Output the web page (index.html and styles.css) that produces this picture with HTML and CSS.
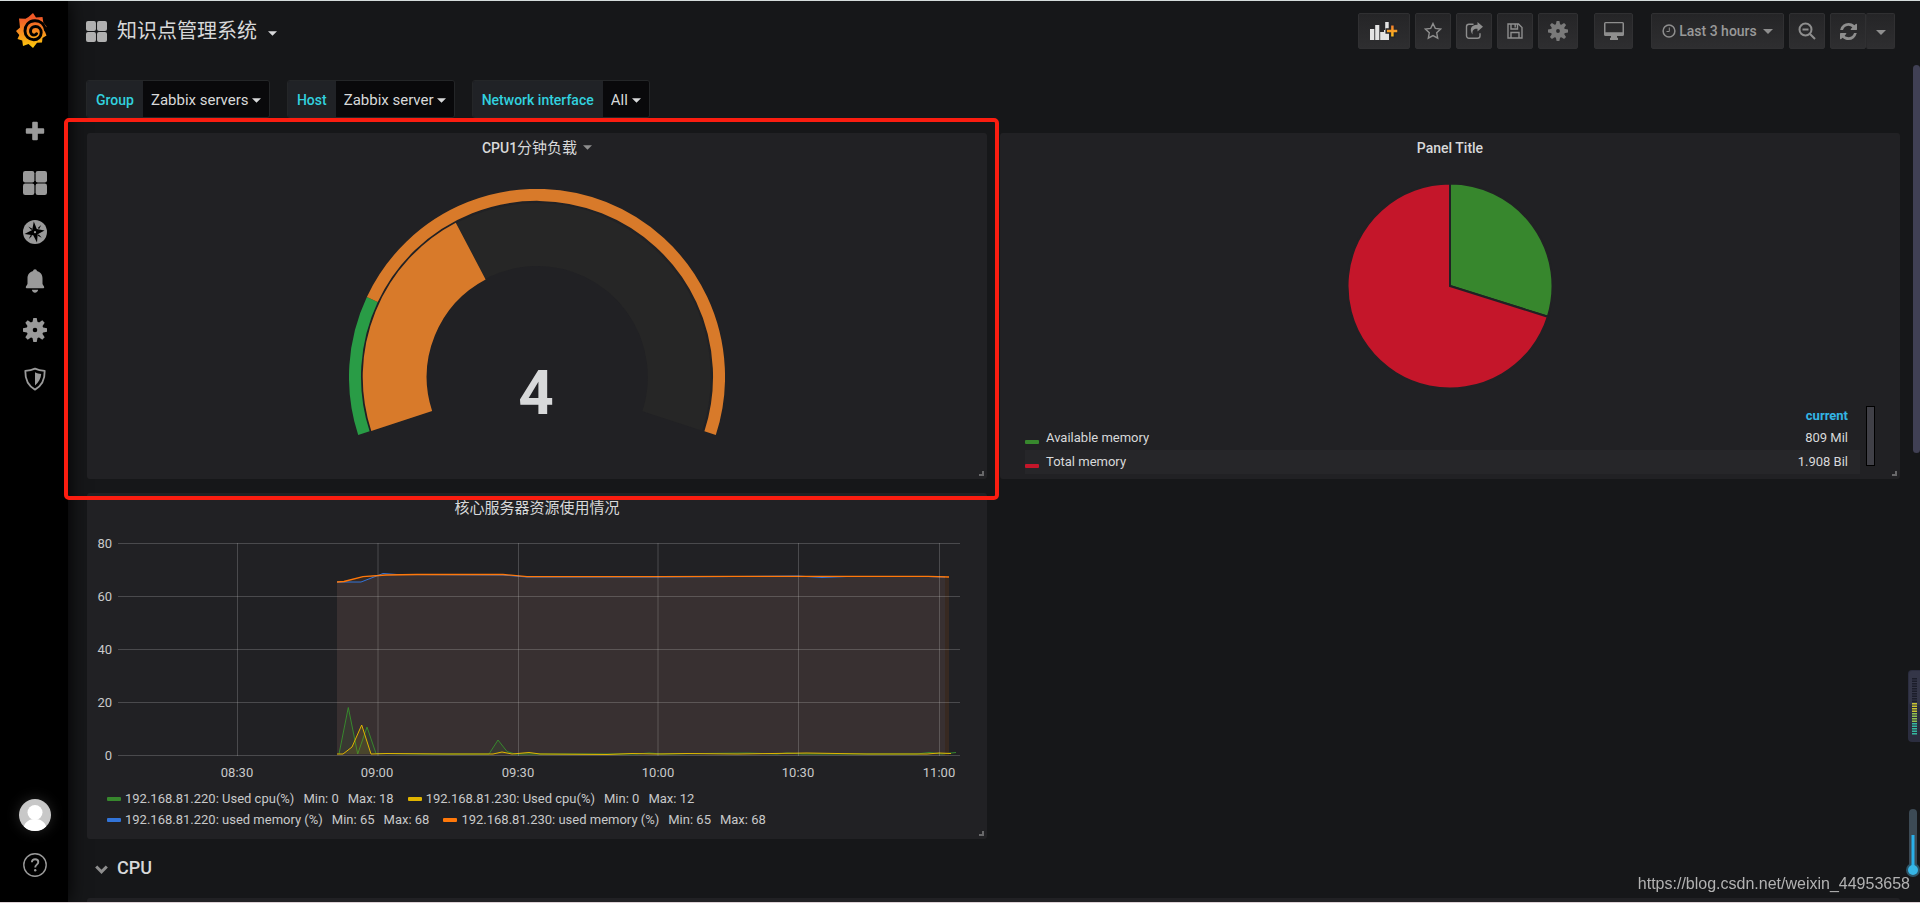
FILE: index.html
```html
<!DOCTYPE html>
<html lang="zh-CN">
<head>
<meta charset="utf-8">
<title>知识点管理系统 - Grafana</title>
<link rel="stylesheet" href="styles.css">
</head>
<body>
<svg class="defs" aria-hidden="true">
  <defs>
    <linearGradient id="logoFill" x1="0" y1="0" x2="0" y2="1">
      <stop offset="0.15" stop-color="#f05a28"/><stop offset="0.6" stop-color="#f7941d"/><stop offset="1" stop-color="#fbca0a"/>
    </linearGradient>
    <linearGradient id="plusFill" x1="0" y1="0" x2="0" y2="1">
      <stop offset="0" stop-color="#f47b2f"/><stop offset="1" stop-color="#fcc21c"/>
    </linearGradient>
    <symbol id="caret" viewBox="0 0 10 5"><path d="M0 0h10L5 5z"/></symbol>
    <symbol id="tiles" viewBox="0 0 24 24"><rect width="11.4" height="11.4" rx="2.2"/><rect x="12.6" width="11.4" height="11.4" rx="2.2"/><rect y="12.6" width="11.4" height="11.4" rx="2.2"/><rect x="12.6" y="12.6" width="11.4" height="11.4" rx="2.2"/></symbol>
    <symbol id="gear" viewBox="0 0 24 24">
      <path fill-rule="evenodd" d="M12 3.600a8.400 8.400 0 1 0 0 16.800a8.400 8.400 0 1 0 0-16.800zM12 9.700a2.300 2.300 0 1 1 0 4.600a2.300 2.300 0 1 1 0-4.600z"/>
      <path d="M10.300 0h3.400l1 5h-5.400zM10.300 24h3.400l1-5h-5.400zM0 10.300v3.400l5 1V9.300zM24 10.300v3.400l-5 1V9.300z"/>
      <path transform="rotate(45 12 12)" d="M10.300 0h3.400l1 5h-5.400zM10.300 24h3.400l1-5h-5.400zM0 10.300v3.400l5 1V9.300zM24 10.300v3.400l-5 1V9.300z"/>
    </symbol>
  </defs>
</svg>
<div class="app">
  <nav class="sidemenu" aria-label="Main">
    <a class="logo" href="#" aria-label="Home">
      <svg viewBox="0 0 31 35" width="31" height="35">
        <path fill="url(#logoFill)" d="M17 0l3 4.500 6.500-.5 .8 5.500 3.200 4-2 4 2 5-4 2.500-.5 4.500-5 .2L17 35l-4.500-4-5.500 2-.8-5.500L1.500 26l1.800-4L0 18l4-3.500L3 5.500l6.500.3L12.500 4z"/>
        <path fill="none" stroke="#000" stroke-width="2.900" stroke-linecap="round" d="M29.500 17C28 10 23 7.500 18.500 7.800 12.500 8.200 9 12.500 9 18c0 5 4 8.700 8.800 8.700 4.200 0 7.400-3.200 7.400-7.200 0-3.500-2.500-6-5.700-6-3 0-5 2.100-5 4.800 0 2.200 1.500 3.800 3.500 3.800 1.200 0 2-.6 2.500-1.400"/>
      </svg>
    </a>
    <a class="create" href="#" aria-label="Create"><svg viewBox="0 0 24 24" width="24" height="24"><path d="M9.200 3.800a1 1 0 0 1 1-1h3.600a1 1 0 0 1 1 1v5.400h5.400a1 1 0 0 1 1 1v3.600a1 1 0 0 1-1 1h-5.400v5.400a1 1 0 0 1-1 1h-3.600a1 1 0 0 1-1-1v-5.400H3.800a1 1 0 0 1-1-1v-3.600a1 1 0 0 1 1-1h5.400z"/></svg></a>
    <a href="#" aria-label="Dashboards"><svg width="24" height="24"><use href="#tiles"/></svg></a>
    <a href="#" aria-label="Explore"><svg viewBox="0 0 24 24" width="24" height="24"><circle cx="12" cy="12" r="12"/><path fill="#000" d="M10.800 1.500l3 7.500 7.700 1.500-6.800 3.700L14 22.500l-3.800-7.300L1.500 14l7.700-4z"/><path fill="#000" d="M5.300 6.500l4 2.200-1 1.200zM18.200 5l-2.100 4-1.300-1zM18.700 17.700l-4-2 1-1.400zM5.800 19l2-4.200 1.400 1z"/><circle cx="12" cy="12.200" r="1.100"/></svg></a>
    <a href="#" aria-label="Alerting"><svg viewBox="0 0 24 24" width="24" height="24"><path d="M12 .3c1.200 0 1.800.8 1.900 1.800 3.300.9 5.600 3.600 5.600 7.300v5.400c0 1.200 1.700 2 1.700 3.500 0 .7-.5 1-1.200 1H4c-.7 0-1.200-.3-1.200-1 0-1.500 1.700-2.300 1.700-3.500V9.400c0-3.700 2.300-6.400 5.600-7.300.1-1 .7-1.800 1.900-1.800zM8.900 20.800h6.200c-.2 1.700-1.400 2.900-3.100 2.900s-2.900-1.200-3.100-2.900z"/></svg></a>
    <a href="#" aria-label="Configuration"><svg width="24" height="24"><use href="#gear"/></svg></a>
    <a href="#" aria-label="Server Admin"><svg viewBox="0 0 24 24" width="24" height="24"><path fill="none" stroke="#9a9a9a" stroke-width="1.800" stroke-linejoin="round" d="M12 1.600c3 1.400 6.300 2 9.700 2.200 .2 9-3.300 15.300-9.700 18.800C5.600 19.100 2.100 12.800 2.300 3.800 5.700 3.600 9 3 12 1.600z"/><path d="M12 5.300c2 1 4 1.500 6.200 1.700-.3 4.500-2.600 8.500-6.200 11.500z"/></svg></a>
    <a class="profile" href="#" aria-label="Profile"><svg viewBox="0 0 32 32" width="32" height="32"><circle cx="16" cy="16" r="16" fill="#c8c8c8"/><circle cx="16" cy="13.500" r="7.500" fill="#fff"/><path fill="#fff" d="M4.800 27.400C6.500 22.700 10.500 20 16 20s9.500 2.700 11.200 7.400A16 16 0 0 1 4.800 27.400z"/></svg></a>
    <a class="help" href="#" aria-label="Help"><svg viewBox="0 0 24 24" width="24" height="24"><g fill="none" stroke="#9a9a9a"><circle cx="12" cy="12" r="11.200" stroke-width="1.400"/><path stroke-width="1.900" d="M8.900 9.300c0-2 1.300-3.100 3.200-3.100s3.200 1.100 3.200 2.800c0 2.600-3.100 2.700-3.100 5.500"/></g><circle cx="12.200" cy="17.300" r="1.200"/></svg></a>
  </nav>

  <main class="main">
    <header class="navbar">
      <button class="dash-title" type="button"><svg class="tiles" width="21" height="21"><use href="#tiles"/></svg><span>知识点管理系统</span><svg class="caret" width="9" height="5"><use href="#caret"/></svg></button>
      <div class="actions">
        <button class="btn add" type="button" aria-label="Add panel"><svg viewBox="0 0 28 18" width="28" height="18"><path fill="#e3e3e3" d="M0 7h4.300v11H0zM5.200 3h4.100v15H5.200zM10.200 10h4.100v8h-4.100zM15.200 0h3.500v18h-3.500zM14 8h5v10h-5z"/><path stroke="#262628" stroke-width="1.500" fill="url(#plusFill)" d="M20.400 2.700h4v4.200H28v4h-3.600v4.400h-4v-4.400h-4.200v-4h4.200z"/></svg></button>
        <button class="btn" type="button" aria-label="Star"><svg viewBox="0 0 18 18" width="18" height="18"><path class="line" d="M9 1.500l2.300 4.900 5.300.7-3.900 3.700 1 5.400L9 13.600l-4.700 2.600 1-5.400L1.400 7.100l5.300-.7z"/></svg></button>
        <button class="btn" type="button" aria-label="Share"><svg viewBox="0 0 18 18" width="18" height="18"><path class="line" d="M8.500 2.200H4a2.500 2.500 0 0 0-2.500 2.500v9A2.500 2.500 0 0 0 4 16.200h8.500a2.500 2.500 0 0 0 2.500-2.500v-2.500"/><path d="M12.500 0L18 4.700l-5.500 4.800V6.800C9 6.600 7 8 7.600 12.500 4.500 8.500 5 3 12.500 2.800z"/></svg></button>
        <button class="btn" type="button" aria-label="Save"><svg viewBox="0 0 18 18" width="18" height="18"><path class="line" d="M2 2h10.500L16 5.500V16H2zM5 2v5h6.500V2M5 16v-5.500h8V16M9.200 2.500v3"/></svg></button>
        <button class="btn settings" type="button" aria-label="Settings"><svg width="20" height="20"><use href="#gear"/></svg></button>
        <button class="btn monitor" type="button" aria-label="Cycle view mode"><svg viewBox="0 0 20 18" width="20" height="18"><path fill-rule="evenodd" d="M1.500 0h17A1.500 1.500 0 0 1 20 1.500v11a1.500 1.500 0 0 1-1.500 1.500H13v1.700h1V18H6v-2.300h1V14H1.500A1.500 1.500 0 0 1 0 12.500v-11A1.500 1.500 0 0 1 1.500 0zm0 1.300v9h17v-9z"/></svg></button>
        <button class="btn time" type="button"><svg viewBox="0 0 14 14" width="14" height="14"><circle class="thick" cx="7" cy="7" r="5.900"/><path class="line" d="M7.300 3.500v4H4.500"/></svg><span>Last 3 hours</span><svg class="caret" width="10" height="5"><use href="#caret"/></svg></button>
        <button class="btn" type="button" aria-label="Zoom out"><svg viewBox="0 0 18 18" width="18" height="18"><circle class="thick" cx="7.500" cy="7.500" r="6"/><path class="thick" d="M4.500 7.500h6M12 12l5 5"/></svg></button>
        <div class="group"><button class="btn" type="button" aria-label="Refresh"><svg viewBox="0 128 1536 1536" width="17" height="17"><path d="M1511 1056q0 5-1 7-64 268-268 434.500t-478 166.500q-146 0-282.500-55t-243.500-157l-129 129q-19 19-45 19t-45-19-19-45v-448q0-26 19-45t45-19h448q26 0 45 19t19 45-19 45l-137 137q71 66 161 102t187 36q134 0 250-65t186-179q11-17 53-117 8-23 30-23h192q13 0 22.500 9.500t9.500 22.500zm25-800v448q0 26-19 45t-45 19h-448q-26 0-45-19t-19-45 19-45l138-138q-148-137-349-137-134 0-250 65t-186 179q-11 17-53 117-8 23-30 23h-199q-13 0-22.500-9.500t-9.500-22.500v-7q65-268 270-434.500t480-166.500q146 0 284 55.500t245 156.500l130-129q19-19 45-19t45 19 19 45z"/></svg></button><button class="btn interval" type="button" aria-label="Refresh interval"><svg width="10" height="5"><use href="#caret"/></svg></button></div>
      </div>
    </header>

    <div class="variables">
      <div class="variable"><label for="v1">Group</label><span class="value"><select id="v1"><option>Zabbix servers</option></select><svg width="9" height="5"><use href="#caret"/></svg></span></div>
      <div class="variable"><label for="v2">Host</label><span class="value"><select id="v2"><option>Zabbix server</option></select><svg width="9" height="5"><use href="#caret"/></svg></span></div>
      <div class="variable"><label for="v3">Network interface</label><span class="value"><select id="v3"><option>All</option></select><svg width="9" height="5"><use href="#caret"/></svg></span></div>
    </div>

    <div class="grid">
      <section class="panel">
        <h2>CPU1<span class="cjk">分钟负载</span><svg class="caret" width="9" height="5"><use href="#caret"/></svg></h2>
        <svg class="gauge" viewBox="-188 -188 376 248" width="376" height="248" role="img" aria-label="4">
          <g fill="none">
            <path stroke="#262626" stroke-width="63" d="M-135.300 44A142.300 142.300 0 1 1 135.300 44"/>
            <path stroke="#d87a2a" stroke-width="64" d="M-135.300 44A142.300 142.300 0 0 1-66.300-125.900"/>
            <path stroke="#299c46" stroke-width="12" d="M-173.100 56.200A182 182 0 0 1-164.700-77.500"/>
            <path stroke="#d87a2a" stroke-width="12" d="M-164.700-77.500A182 182 0 0 1 173.100 56.200"/>
          </g>
          <text class="reading" x="-1" y="37">4</text>
        </svg>
        <span class="resize"></span>
        <span class="highlight"></span>
      </section>

      <section class="panel">
        <h2>Panel Title</h2>
        <svg class="pie" viewBox="-103 -103 206 206" width="206" height="206" role="img" aria-label="Memory">
          <g stroke="#212124" stroke-width="2"><path fill="#37872d" d="M0 0V-102.500A102.500 102.500 0 0 1 97.800 30.700z"/><path fill="#c4162a" d="M0 0L97.800 30.700A102.500 102.500 0 1 1 0-102.500z"/></g>
        </svg>
        <div class="legend-box">
          <table class="legend-table">
            <thead><tr><th></th><th scope="col">current</th></tr></thead>
            <tbody>
              <tr><td><i class="dash green"></i>Available memory</td><td>809 Mil</td></tr>
              <tr><td><i class="dash red"></i>Total memory</td><td>1.908 Bil</td></tr>
            </tbody>
          </table>
          <span class="legend-scroll"></span>
        </div>
        <span class="resize"></span>
      </section>

      <section class="panel">
        <h2><span class="cjk">核心服务器资源使用情况</span></h2>
        <svg class="graph" viewBox="0 0 900 262" role="img" aria-label="Server resource usage">
          <g fill="none" stroke-linejoin="round">
            <path fill="#3274d9" fill-opacity=".1" d="M250 232.500V59H274L296 50.500 310 51.500 416 52 440 54 571 54 650 53.500 711 53 735 54.500 760 53.500 841 53.500 858 54V232.500z"/>
            <path fill="#ff780a" fill-opacity=".1" d="M250 232.500V59L276 53.700 299 52 330 51.500 416 51.500 440 53.600 571 53.600 650 53.300 841 53.300 862 54V232.500z"/>
            <path stroke="#3274d9" d="M250 59H274L296 50.500 310 51.500 416 52 440 54 571 54 650 53.500 711 53 735 54.500 760 53.500 841 53.500 858 54"/>
            <path stroke="#ff780a" stroke-width="1.300" d="M250 59L257 58.500 276 53.700 299 52 330 51.500 416 51.500 440 53.600 571 53.600 650 53.300 841 53.300 862 54"/>
            <path stroke="#37872d" fill="#37872d" fill-opacity=".1" d="M252 231L261.300 184.500 270.700 231 280 204 289 230.500 340 231 402 231 411 217 420 228.500 428 231 550 231 562 230 575 231 660 230 690 231 700 230 715 231 830 231 842 229.500 855 231 869 229.500"/>
            <path stroke="#e0b400" fill="#e0b400" fill-opacity=".1" d="M250 231H256L265 224 274.700 202 284 231 300 230.500 360 231 406 231 415 229 425 231 442 229.500 453 231 520 231.500 545 230.500 570 231 600 230.500 650 231 720 230 780 231 840 231 852 230 864 230.500"/>
          </g>
          <path class="gridline" d="M31 20.500H873M31 73.500H873M31 126.500H873M31 179.500H873M31 232.500H873M150.500 20V233M291 20V233M431.500 20V233M571 20V233M711.500 20V233M852.500 20V233"/>
          <g class="axis end"><text x="25" y="25">80</text><text x="25" y="78">60</text><text x="25" y="131">40</text><text x="25" y="184">20</text><text x="25" y="237">0</text></g>
          <g class="axis mid"><text x="150" y="254">08:30</text><text x="290" y="254">09:00</text><text x="431" y="254">09:30</text><text x="571" y="254">10:00</text><text x="711" y="254">10:30</text><text x="852" y="254">11:00</text></g>
        </svg>
        <ul class="legend">
          <li><i class="dash green"></i><span>192.168.81.220: Used cpu(%)</span><span>Min: 0</span><span>Max: 18</span></li>
          <li><i class="dash yellow"></i><span>192.168.81.230: Used cpu(%)</span><span>Min: 0</span><span>Max: 12</span></li>
        </ul>
        <ul class="legend">
          <li><i class="dash blue"></i><span>192.168.81.220: used memory (%)</span><span>Min: 65</span><span>Max: 68</span></li>
          <li><i class="dash orange"></i><span>192.168.81.230: used memory (%)</span><span>Min: 65</span><span>Max: 68</span></li>
        </ul>
        <span class="resize"></span>
      </section>
    </div>

    <button class="row-title" type="button"><svg viewBox="0 0 13 9" width="13" height="9"><path fill="none" stroke="#8e8e8e" stroke-width="3" d="M1.200 1.500l5.300 5.300 5.300-5.300"/></svg>CPU</button>
    <section class="panel next"></section>
  </main>
</div>
<span class="page-scroll"></span>
<svg class="meter" viewBox="0 0 12 72" width="12" height="72" aria-hidden="true">
  <rect width="18" height="72" rx="4" fill="#2b2d3f"/><rect x="1" y="1" width="18" height="34" rx="3" fill="#343648"/>
  <g fill="none" stroke-width="5" stroke-dasharray="1.500 1"><path stroke="#1b1d2a" d="M6.500 8v24"/><path stroke="#c9c531" d="M6.500 33v10"/><path stroke="#8fc050" d="M6.500 43v10"/><path stroke="#35b8a0" d="M6.500 53v12"/></g>
</svg>
<svg class="thermo" viewBox="0 0 14 70" width="14" height="70" aria-hidden="true">
  <rect x="3" width="8" height="64" rx="4" fill="#3c4a55"/><circle cx="7" cy="61" r="7" fill="#2d5568"/><path stroke="#29b0ea" stroke-width="3" d="M7 26v34"/><circle cx="7" cy="61" r="5" fill="#37b6e6"/>
</svg>
<span class="watermark">https://blog.csdn.net/weixin_44953658</span>
</body>
</html>
```
FILE: styles.css
```css
* { box-sizing: border-box; }
body {
  margin: 0;
  background: #161719;
  color: #d8d9da;
  font-family: Roboto, "Noto Sans CJK SC", sans-serif;
  font-size: 14px;
  line-height: 20px;
}
button, select { font: inherit; color: inherit; }
.defs { position: absolute; width: 0; height: 0; }
.app {
  display: flex;
  height: 100vh;
  overflow: hidden;
  border-top: 1px solid #d5dcdc;
  border-bottom: 1px solid #ddd2d6;
}

.sidemenu {
  flex: none;
  display: flex;
  flex-direction: column;
  align-items: center;
  gap: 25px;
  width: 68px;
  padding: 12px 0 25px 1px;
  background: #000;
  box-shadow: 0 0 18px #000;
  fill: #9a9a9a;
}
.sidemenu svg { display: block; }
.logo { margin: 0 6px 46px 0; }
.create { margin-bottom: 3px; }
.profile { margin-top: auto; border-radius: 50%; box-shadow: 0 0 14px rgba(255, 255, 255, .15); }
.help { margin-top: -3px; }

.main { flex: 1; min-width: 0; padding: 12px 20px 0 19px; }
.navbar { display: flex; justify-content: space-between; height: 36px; }
.dash-title {
  display: flex;
  align-items: center;
  margin-left: -1px;
  padding: 0;
  border: 0;
  background: none;
  font-size: 20px;
  fill: #d8d9da;
}
.dash-title .tiles { margin-right: 10px; fill: #b0b0b0; }
.dash-title .caret { margin: 4px 0 0 11px; }
.actions { display: flex; gap: 5px; padding-right: 5px; }
.btn {
  display: flex;
  align-items: center;
  justify-content: center;
  width: 36px;
  height: 36px;
  padding: 0;
  border: 1px solid #303032;
  border-radius: 2px;
  background: linear-gradient(#252527, #2e2e30);
  color: #999;
  fill: #8e8e8e;
}
.line { fill: none; stroke: #8e8e8e; stroke-width: 1.4px; }
.thick { fill: none; stroke: #8e8e8e; stroke-width: 2px; }
.add { width: 52px; }
.settings { width: 40px; fill: #7a7a7a; }
.monitor { width: 39px; margin: 0 13px 0 11px; }
.time { width: 133px; font-weight: 500; }
.time .line { stroke-width: 1px; }
.time .thick { stroke-width: 1.5px; }
.time span { margin: 0 6px 0 3px; }
.group { display: flex; }
.interval { width: 29px; border-left-color: #29292b; padding-top: 3px; }

.variables { display: flex; gap: 17px; margin: 31px 0 0 -1px; }
.variable { display: flex; height: 38px; border: 1px solid #242628; border-radius: 3px; overflow: hidden; }
.variable label { padding: 0 9px; background: #202226; color: #32d1df; font-weight: 500; line-height: 38px; }
.value { display: grid; align-items: center; background: #09090b; fill: #d8d9da; }
.value select, .value svg { grid-area: 1 / 1; }
.value select { appearance: none; height: 38px; padding: 0 20px 0 8px; border: 0; background: none; font-size: 15px; }
.value svg { justify-self: end; margin-right: 8px; pointer-events: none; }

.grid { display: grid; grid-template-columns: 1fr 1fr; gap: 14px 13px; margin-top: 15px; }
.panel {
  position: relative;
  min-height: 346px;
  border-radius: 3px;
  background: #212124;
}
.panel h2 { margin: 0; padding-top: 5px; font-size: 14px; font-weight: 500; line-height: 20px; text-align: center; }
.cjk { font-size: 15px; font-weight: 400; }
h2 .caret { margin: 0 0 3px 6px; fill: #8e8e8e; }
.resize {
  position: absolute;
  right: 3px;
  bottom: 3px;
  width: 5px;
  height: 5px;
  border-right: 2px solid #68686a;
  border-bottom: 2px solid #68686a;
}
.highlight {
  position: absolute;
  z-index: 1;
  inset: -15px -12px -21px -23px;
  border: 4px solid #fb1d10;
  border-radius: 5px;
}
.gauge { display: block; margin: 31px auto 0; }
.reading { fill: #d8d9da; font-size: 62px; font-weight: 700; text-anchor: middle; }
.pie { display: block; margin: 25px auto 0; }

.legend-box { display: flex; gap: 6px; margin: 17px 25px 0 25px; }
.legend-table { flex: 1; border-collapse: collapse; font-size: 13px; }
.legend-table th { padding: 0 12px 0 0; color: #33b5e5; font-weight: 700; text-align: right; }
.legend-table td { height: 24px; padding: 0; }
.legend-table td:last-child { padding-right: 12px; text-align: right; }
.legend-table tr:nth-child(2) td { background: #262629; }
.legend-scroll { width: 9px; height: 60px; border: 1px solid #000; background: #404047; }
.dash { display: inline-block; width: 14px; height: 4px; border-radius: 1px; }
.legend-table .dash { margin-right: 7px; vertical-align: -2px; }
.green { background: #37872d; }
.red { background: #c4162a; }
.yellow { background: #e0b400; }
.blue { background: #3274d9; }
.orange { background: #ff780a; }

.graph { display: block; width: 100%; margin: 5px 0 3px; }
.gridline { fill: none; stroke: #c8c8c8; stroke-opacity: .25; }
.axis { fill: #c8c9ca; font-size: 13px; }
.end { text-anchor: end; }
.mid { text-anchor: middle; }
.legend { display: flex; gap: 14px; margin: 0; padding: 0 0 0 20px; list-style: none; font-size: 13px; line-height: 21px; color: #c8c9ca; }
.legend li { display: flex; align-items: center; }
.legend .dash { margin-right: 4px; }
.legend span + span { margin-left: 9px; }

.row-title { display: flex; align-items: center; gap: 9px; margin: 19px 0 0 8px; padding: 0; border: 0; background: none; font-size: 18px; font-weight: 500; line-height: 20px; }
.row-title svg { margin-top: 3px; }
.next { margin-top: 20px; }

.page-scroll { position: fixed; top: 65px; right: 0; width: 7px; height: 388px; border-radius: 4px; background: #404054; }
.meter { position: fixed; right: 0; bottom: 161px; }
.thermo { position: fixed; right: 0; bottom: 24px; }
.watermark { position: fixed; right: 10px; bottom: 9px; color: #b2b2b2; font-family: "Liberation Sans", sans-serif; font-size: 16px; }
```
